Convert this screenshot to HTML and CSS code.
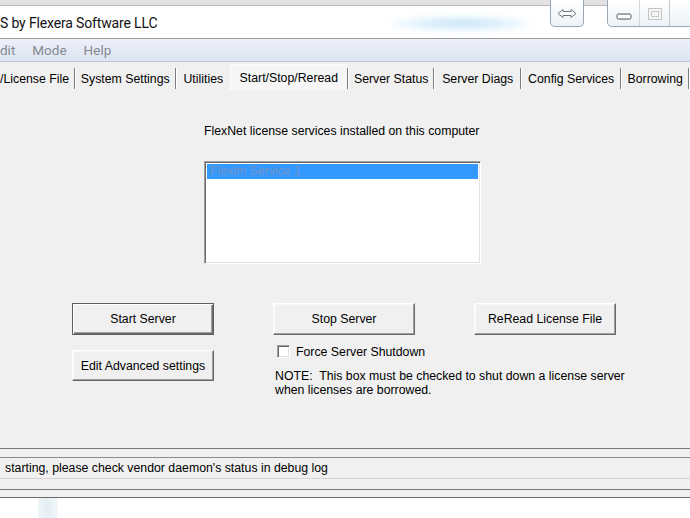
FILE: index.html
```html
<!DOCTYPE html>
<html>
<head>
<meta charset="utf-8">
<link rel="stylesheet" href="styles.css">
</head>
<body>
<div class="window">
  <header class="titlebar">
    <div class="title">S by Flexera Software LLC</div>
    <div class="glow"></div>
    <div class="cap-swap">
      <svg width="20" height="11" viewBox="0 0 20 11"><path d="M1 5.5 L6 1.5 L6 3.5 L14 3.5 L14 1.5 L19 5.5 L14 9.5 L14 7.5 L6 7.5 L6 9.5 Z" fill="#fdfdfd" stroke="#6d7684" stroke-width="1" stroke-linejoin="round"/></svg>
    </div>
    <div class="cap-group">
      <span class="cap-btn cap-min"><svg width="16" height="7" viewBox="0 0 16 7"><rect x="1" y="1" width="14" height="5" rx="1.5" fill="#fff" stroke="#4a4f57"/></svg></span>
      <span class="cap-btn cap-max"><svg width="14" height="12" viewBox="0 0 14 12"><rect x="0.5" y="0.5" width="13" height="11" fill="#f6f6f6" stroke="#c4c4c4"/><rect x="3.5" y="3.5" width="7" height="5" fill="none" stroke="#c8c8c8"/></svg></span>
      <span class="cap-btn cap-close"></span>
    </div>
  </header>
  <nav class="menubar">
    <span class="menu-item">dit</span>
    <span class="menu-item">Mode</span>
    <span class="menu-item">Help</span>
  </nav>
  <div class="tabs">
    <span class="tab tab-license">/License File</span><span class="sep"></span>
    <span class="tab tab-system">System Settings</span><span class="sep"></span>
    <span class="tab tab-util">Utilities</span>
    <span class="tab tab-active">Start/Stop/Reread</span><span class="sep"></span>
    <span class="tab tab-status">Server Status</span><span class="sep"></span>
    <span class="tab tab-diags">Server Diags</span><span class="sep"></span>
    <span class="tab tab-config">Config Services</span><span class="sep"></span>
    <span class="tab tab-borrow">Borrowing</span><span class="sep"></span>
  </div>
  <main class="panel">
    <div class="services">
      <div class="label">FlexNet license services installed on this computer</div>
      <div class="listbox">
        <div class="list-item selected">Flexlm Service 1</div>
      </div>
    </div>
    <div class="actions">
      <button class="btn btn-default">Start Server</button>
      <button class="btn">Stop Server</button>
      <button class="btn">ReRead License File</button>
      <button class="btn btn-edit">Edit Advanced settings</button>
      <div class="force">
        <div class="check-row"><span class="checkbox"></span><span>Force Server Shutdown</span></div>
        <div class="note">NOTE:&nbsp; This box must be checked to shut down a license server<br>when licenses are borrowed.</div>
      </div>
    </div>
  </main>
  <div class="status">
    <div class="status-field">starting, please check vendor daemon's status in debug log</div>
  </div>
  <div class="frame-bottom"><div class="frame-inner"></div></div>
  <div class="desktop"><div class="desk-strip"></div></div>
</div>
</body>
</html>
```
FILE: styles.css
```css
* { box-sizing: border-box; }
html, body { margin: 0; padding: 0; }
body {
  width: 690px;
  height: 518px;
  overflow: hidden;
  background: #f0f0f0;
  font-family: "Liberation Sans", Arial, sans-serif;
  font-size: 12.3px;
  color: #000;
}
.window { width: 690px; display: flex; flex-direction: column; }

/* title bar */
.titlebar {
  height: 39px;
  display: flex;
  align-items: flex-start;
  background: linear-gradient(#e2e2e2 0 5px, #b8b8b8 5px 6px, #ffffff 6px 38px, #9c9c9c 38px 39px);
  overflow: visible;
}
.title {
  font-family: Roboto, "Noto Sans", sans-serif;
  font-size: 14px;
  letter-spacing: -0.15px;
  line-height: 16px;
  margin-top: 15px;
  color: #111;
  white-space: nowrap;
}
.glow {
  width: 145px;
  height: 15px;
  margin-top: 16px;
  margin-left: 232px;
  border-radius: 8px;
  background: radial-gradient(ellipse at center, rgba(150,205,240,0.6), rgba(190,228,250,0.3) 60%, rgba(255,255,255,0) 75%);
  filter: blur(3px);
}
.cap-swap {
  margin-left: auto;
  width: 34px;
  height: 27px;
  border: 1px solid #9ba6b3;
  border-top: none;
  border-radius: 0 0 5px 5px;
  background: linear-gradient(#ffffff, #eef2f6);
  display: flex;
  align-items: center;
  justify-content: center;
}
.cap-group {
  margin-left: 23px;
  margin-right: -8px;
  width: 91px;
  height: 27px;
  display: flex;
  border: 1px solid #9ba6b3;
  border-top: none;
  border-radius: 0 0 0 5px;
  background: linear-gradient(#ffffff, #eef2f6);
}
.cap-btn { display: flex; align-items: center; justify-content: center; height: 100%; }
.cap-min { width: 32px; border-right: 1px solid #d3d8de; padding-top: 6px; }
.cap-max { width: 30px; border-right: 1px solid #c3c9d1; padding-top: 2px; }
.cap-close { flex: 1; }

/* menu */
.menubar {
  height: 23px;
  display: flex;
  align-items: center;
  gap: 17px;
  background: linear-gradient(#edf0f8, #dde4f1);
  border-bottom: 1px solid #c3c9d4;
  font-family: Roboto, "Noto Sans", sans-serif;
  font-size: 13.5px;
  color: #868a92;
  padding-bottom: 1px;
}
.menu-item:first-child { margin-left: 0; }

/* tabs */
.tabs {
  height: 28px;
  display: flex;
  align-items: center;
  white-space: nowrap;
  background: #f0f0f0;
}
.tab {
  display: flex;
  align-items: center;
  justify-content: center;
  height: 100%;
  padding-top: 5px;
}
.tab-license { width: 74px; justify-content: flex-start; }
.tab-system { width: 100px; }
.tab-util { width: 53px; }
.tab-active {
  width: 118px;
  height: 26px;
  margin-top: 2px;
  padding-top: 1px;
  background: #f6f6f6;
  border-left: 1px solid #ffffff;
  border-top: 1px solid #fbfbfb;
}
.tab-status { width: 85px; }
.tab-diags { width: 85px; }
.tab-config { width: 99px; }
.tab-borrow { width: 66px; }
.sep {
  width: 2px;
  height: 21px;
  margin-top: 4px;
  border-left: 1px solid #7d7d7d;
  border-right: 1px solid #ffffff;
  flex: none;
}

/* panel */
.panel {
  height: 359px;
  border-bottom: 1px solid #7a7a7a;
  background: #f0f0f0;
  padding-top: 34px;
}
.services { padding-left: 204px; }
.label { line-height: 15px; white-space: nowrap; }
.listbox {
  margin-top: 22px;
  width: 277px;
  height: 103px;
  background: #fff;
  border-top: 1px solid #a0a0a0;
  border-left: 1px solid #a0a0a0;
  border-right: 1px solid #ffffff;
  border-bottom: 1px solid #ffffff;
  box-shadow: inset 1px 1px 0 #696969, inset -1px -1px 0 #e3e3e3;
  padding: 2px 2px 0 2px;
}
.list-item {
  height: 15px;
  line-height: 15px;
  padding-left: 3px;
}
.list-item.selected { background: #3399ff; color: #7193c6; }

.actions {
  margin-top: 39px;
  margin-left: 72px;
  display: grid;
  grid-template-columns: 142px 142px 142px;
  column-gap: 59px;
  row-gap: 10px;
  align-items: start;
}
.btn {
  font: inherit;
  color: #000;
  height: 32px;
  width: 142px;
  padding: 0;
  background: #f0f0f0;
  border: 1px solid;
  border-color: #ffffff #696969 #696969 #ffffff;
  box-shadow: inset -1px -1px 0 #a0a0a0, inset 1px 1px 0 #f8f8f8;
}
.btn-default {
  border-color: #5e5e5e;
  box-shadow: inset 1px 1px 0 #ffffff, inset -1px -1px 0 #696969, inset -2px -2px 0 #a0a0a0;
}
.btn-edit { margin-top: 5px; height: 31px; }
.force { grid-column: 2 / span 2; padding-left: 2px; }
.check-row {
  display: flex;
  align-items: center;
  height: 13px;
  gap: 6px;
  white-space: nowrap;
}
.checkbox {
  width: 13px;
  height: 13px;
  margin-left: 2px;
  flex: none;
  background: #fff;
  border-top: 1px solid #a0a0a0;
  border-left: 1px solid #a0a0a0;
  border-right: 1px solid #ffffff;
  border-bottom: 1px solid #ffffff;
  box-shadow: inset 1px 1px 0 #696969, inset -1px -1px 0 #e3e3e3;
}
.note { margin-top: 11px; line-height: 14px; white-space: nowrap; }

/* status */
.status { padding-top: 8px; background: #f0f0f0; }
.status-field {
  height: 22px;
  line-height: 20px;
  border-top: 1px solid #8a8a8a;
  border-bottom: 1px solid #d6d6d6;
  padding-left: 5px;
  white-space: nowrap;
}
.frame-bottom {
  height: 19px;
  padding-top: 10px;
  background: #f0f0f0;
}
.frame-inner {
  height: 9px;
  border-top: 1px solid #7a7a7a;
  border-bottom: 1px solid #6b6b6b;
}
.desktop {
  height: 30px;
  background: #ffffff;
  padding-left: 38px;
}
.desk-strip {
  width: 20px;
  height: 100%;
  background: linear-gradient(90deg, #eef6f9, #e4eef2 50%, #f3f8fa);
}
```
